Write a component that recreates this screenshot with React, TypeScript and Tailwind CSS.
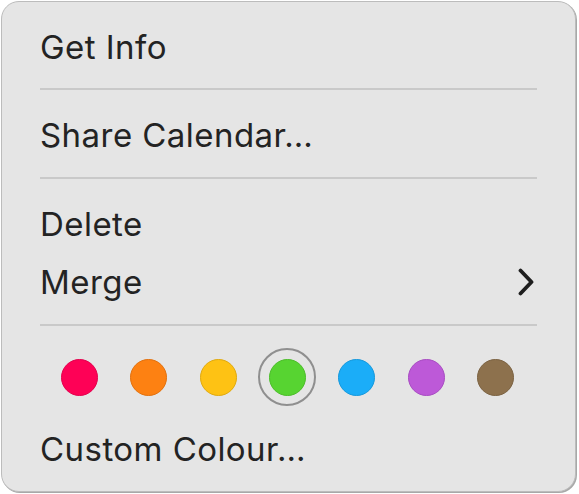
import React from "react";

const colors = [
  { bg: "bg-[#fe0156]", br: "border-[#e3004c]" },
  { bg: "bg-[#fd8112]", br: "border-[#e2700c]" },
  { bg: "bg-[#fec214]", br: "border-[#e0a90e]" },
  { bg: "bg-[#57d431]", br: "border-[#4bbd29]", selected: true },
  { bg: "bg-[#1badf8]", br: "border-[#1598dc]" },
  { bg: "bg-[#bd59d8]", br: "border-[#a84cc2]" },
  { bg: "bg-[#8d714d]", br: "border-[#7b6242]" },
];

function Row({ children }: { children: React.ReactNode }) {
  return (
    <div className="h-[58px] flex items-center justify-between text-[33px] leading-none tracking-[0.45px] text-[#232323]">
      {children}
    </div>
  );
}

function Sep({ mt }: { mt: string }) {
  return <div className={`h-[2px] bg-[#c9c9c9] ${mt} mb-[16px]`} />;
}

export default function App() {
  return (
    <div className="w-[579px] h-[494px] bg-white" style={{ fontFamily: "Inter, 'Liberation Sans', sans-serif" }}>
      <div className="ml-[1px] mt-[1px] w-[575px] h-[491px] rounded-[18px] border border-[#bcbcbc] bg-[#e5e5e5] shadow-[1px_1px_0_0_#a8a8a8] pl-[38px] pr-[38px] pt-[16px]">
        <Row>
          <span>Get Info</span>
        </Row>
        <Sep mt="mt-[12px]" />
        <Row>
          <span>Share Calendar…</span>
        </Row>
        <Sep mt="mt-[13px]" />
        <Row>
          <span>Delete</span>
        </Row>
        <Row>
          <span>Merge</span>
          <svg width="16" height="28" viewBox="0 0 16 28" className="mr-[3px]">
            <polyline
              points="2.5,2.5 13.5,14 2.5,25.5"
              fill="none"
              stroke="#1e1e1e"
              strokeWidth="3.8"
              strokeLinecap="round"
              strokeLinejoin="round"
            />
          </svg>
        </Row>
        <div className="h-[2px] bg-[#c9c9c9] mt-[13px]" />
        <div className="mt-[22px] h-[58px] flex items-center ml-[10.5px] gap-[11.33px]">
          {colors.map((c, i) => (
            <div
              key={i}
              className={`w-[58px] h-[58px] rounded-full flex items-center justify-center ${
                c.selected ? "border-2 border-[#8f8f8f]" : ""
              }`}
            >
              <div className={`w-[37px] h-[37px] rounded-full border ${c.bg} ${c.br}`} />
            </div>
          ))}
        </div>
        <div className="mt-[14px]">
          <Row>
            <span>Custom Colour…</span>
          </Row>
        </div>
      </div>
    </div>
  );
}
